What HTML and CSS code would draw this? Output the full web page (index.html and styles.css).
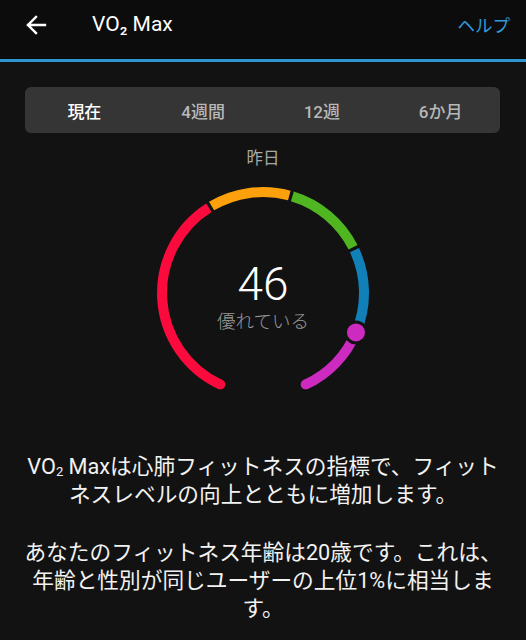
FILE: index.html
```html
<!DOCTYPE html>
<html lang="ja">
<head>
<meta charset="utf-8">
<link rel="stylesheet" href="styles.css">
</head>
<body>
<header class="topbar">
  <svg class="back" width="22" height="20" viewBox="0 0 22 20"><path d="M20 10H3M11 2L3 10L11 18" fill="none" stroke="#fff" stroke-width="2.4" stroke-linecap="square"/></svg>
  <h1 class="title">VO₂ Max</h1>
  <span class="help">ヘルプ</span>
</header>
<main class="content">
  <nav class="tabs">
    <span class="tab active">現在</span>
    <span class="tab">4週間</span>
    <span class="tab">12週</span>
    <span class="tab">6か月</span>
  </nav>
  <div class="period">昨日</div>
  <div class="gauge">
    <svg class="gauge-svg" width="230" height="230" viewBox="0 0 230 230">
      <g fill="none" stroke-width="10" stroke-linecap="butt">
        <path d="M72.32 206.54 A101 101 0 0 1 60.88 29.73" stroke="#fb0a3e"/>
        <path d="M63.59 28.07 A101 101 0 0 1 141.31 17.48" stroke="#fca00c"/>
        <path d="M144.36 18.36 A101 101 0 0 1 205.07 69.31" stroke="#4fb622"/>
        <path d="M206.47 72.15 A101 101 0 0 1 207.97 154.46" stroke="#1280b8"/>
        <path d="M207.97 154.46 A101 101 0 0 1 157.68 206.54" stroke="#cd2bbf"/>
      </g>
      <circle cx="72.32" cy="206.54" r="5" fill="#fb0a3e"/>
      <circle cx="157.68" cy="206.54" r="5" fill="#cd2bbf"/>
      <circle cx="207.97" cy="154.46" r="10.5" fill="#cd2bbf" stroke="#121212" stroke-width="3"/>
    </svg>
    <div class="reading">
      <div class="value">46</div>
      <div class="rating">優れている</div>
    </div>
  </div>
  <p class="desc">VO<sub>2</sub> Maxは心肺フィットネスの指標で、フィットネスレベルの向上とともに増加します。</p>
  <p class="desc">あなたのフィットネス年齢は20歳です。これは、年齢と性別が同じユーザーの上位1%に相当します。</p>
</main>
</body>
</html>
```
FILE: styles.css
```css
html, body {
  margin: 0;
  padding: 0;
  background: #121212;
  font-family: Roboto, "Noto Sans CJK JP", sans-serif;
  color: #fff;
}
.topbar {
  height: 59px;
  box-sizing: border-box;
  background: #0c0c0d;
  border-bottom: 3px solid #2d95d0;
  display: flex;
  align-items: center;
  padding: 0 16px 11px 25px;
  height: 62px;
}
.back {
  display: block;
  margin-top: 1px;
}
.title {
  margin: 0 0 0 45px;
  font-size: 21px;
  font-weight: 400;
  flex: 1;
  line-height: 1;
}
.help {
  color: #2f9bdb;
  font-size: 17.5px;
}
.content {
  padding: 25px 0 0;
}
.tabs {
  margin: 0 26px 0 25px;
  height: 46px;
  background: #353535;
  border-radius: 6px;
  display: grid;
  grid-template-columns: repeat(4, 1fr);
  align-items: center;
  justify-items: center;
}
.tab {
  font-size: 17px;
  font-weight: 500;
  color: #b8b8b8;
}
.tab.active {
  color: #fff;
}
.period {
  margin-top: 14px;
  text-align: center;
  font-size: 16.5px;
  line-height: 24px;
  color: #a8a8a8;
}
.gauge {
  margin-top: 7px;
  display: grid;
  justify-items: center;
  align-items: center;
}
.gauge > * {
  grid-area: 1 / 1;
}
.gauge-svg {
  display: block;
}
.reading {
  text-align: center;
  margin-top: 8px;
}
.value {
  font-size: 46px;
  font-weight: 300;
  line-height: 50px;
}
.rating {
  font-size: 18.5px;
  font-weight: 300;
  color: #9a9a9a;
  line-height: 26px;
}
.desc {
  margin: 0 24px;
  text-align: center;
  font-size: 21.7px;
  line-height: 28px;
  color: #f2f2f2;
}
.desc:first-of-type {
  margin-top: 45px;
}
.desc + .desc {
  margin-top: 30px;
}
.desc sub {
  font-size: 0.6em;
  vertical-align: -0.15em;
  line-height: 0;
}
```
